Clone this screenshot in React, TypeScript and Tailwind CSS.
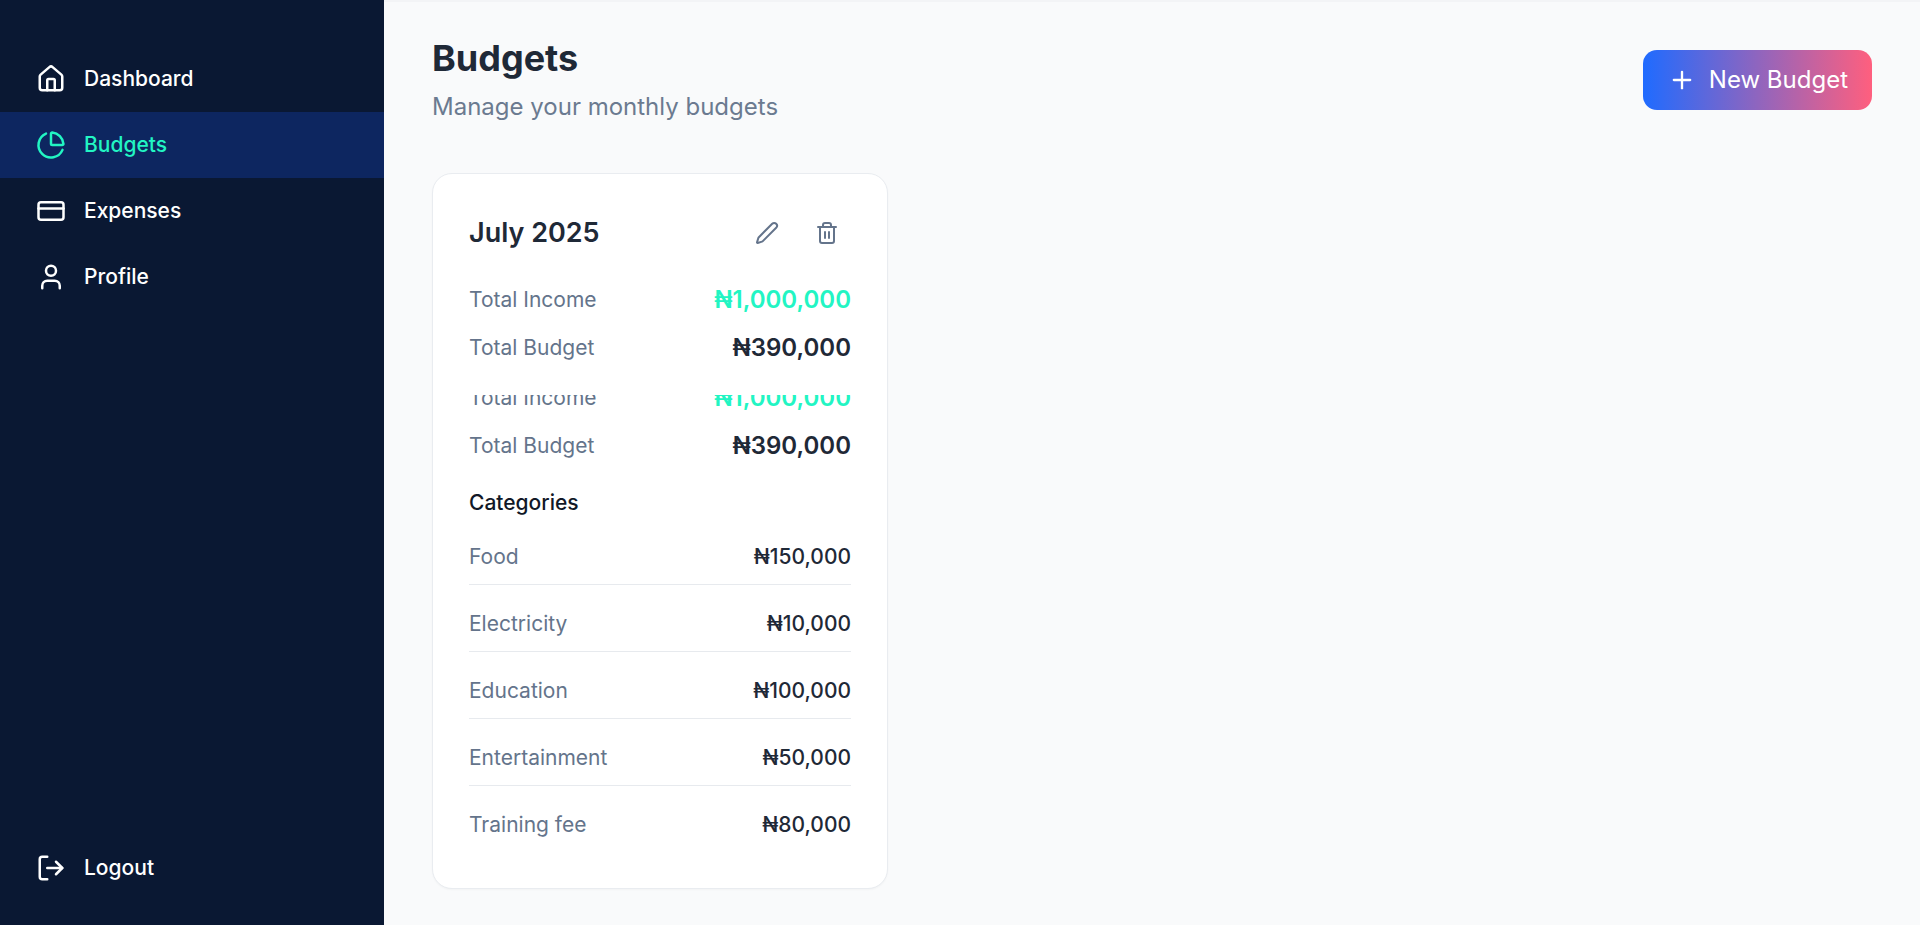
import { ChartPie, CreditCard, House, LogOut, Pen, Plus, Trash2, User } from "lucide-react";

const navItems = [
  { label: "Dashboard", icon: House },
  { label: "Budgets", icon: ChartPie, active: true },
  { label: "Expenses", icon: CreditCard },
  { label: "Profile", icon: User },
];

const categories = [
  { name: "Food", amount: "₦150,000" },
  { name: "Electricity", amount: "₦10,000" },
  { name: "Education", amount: "₦100,000" },
  { name: "Entertainment", amount: "₦50,000" },
  { name: "Training fee", amount: "₦80,000" },
];

function Totals() {
  return (
    <div className="flex flex-col gap-5">
      <div className="flex h-7 items-center justify-between">
        <span className="text-[21px] text-[#64748b]">Total Income</span>
        <span className="text-[24px] font-semibold text-[#22f5c3]">₦1,000,000</span>
      </div>
      <div className="flex h-7 items-center justify-between">
        <span className="text-[21px] text-[#64748b]">Total Budget</span>
        <span className="text-[24px] font-semibold text-[#1f2937]">₦390,000</span>
      </div>
    </div>
  );
}

export default function App() {
  return (
    <div className="flex h-[925px] overflow-hidden bg-[#f9fafb] font-['Inter',sans-serif]">
      <aside className="flex w-[384px] shrink-0 flex-col justify-between bg-[#0a1833] pt-[46px] pb-[24px]">
        <nav className="flex flex-col">
          {navItems.map((item) => (
            <div
              key={item.label}
              className={`flex h-[66px] items-center gap-[18px] pl-[36px] text-[21px] font-medium ${
                item.active ? "bg-[#0d2660] text-[#22f5c3]" : "text-white"
              }`}
            >
              <item.icon size={30} strokeWidth={2} />
              <span>{item.label}</span>
            </div>
          ))}
        </nav>
        <div className="flex h-[66px] items-center gap-[18px] pl-[36px] text-[21px] font-medium text-white">
          <LogOut size={30} strokeWidth={2} />
          <span>Logout</span>
        </div>
      </aside>

      <main className="flex-1 border-t-2 border-[#f3f4f6] px-12 pt-[34px]">
        <div className="flex items-start justify-between">
          <div>
            <h1 className="text-[36px] leading-[44px] font-bold text-[#1f2937]">Budgets</h1>
            <p className="mt-[11px] text-[24px] leading-[32px] text-[#6b7a90]">Manage your monthly budgets</p>
          </div>
          <button className="mt-[14px] flex h-[60px] items-center gap-[13px] rounded-[14px] bg-linear-to-r/srgb from-[#1f6bff] to-[#ff5f7e] pr-6 pl-[25px] text-[24px] text-white">
            <Plus size={28} />
            New Budget
          </button>
        </div>

        <div className="mt-[50px] w-[456px] rounded-[20px] border border-[#e9ecf0] bg-white px-9 pt-[37px] pb-[35px] shadow-[0_1px_2px_rgba(0,0,0,0.03)]">
          <div className="flex h-[44px] items-center justify-between">
            <h2 className="text-[27px] font-semibold text-[#1f2937]">July 2025</h2>
            <div className="flex items-center gap-[36px] pr-[12px] text-[#64748b]">
              <Pen size={24} strokeWidth={2} />
              <Trash2 size={24} strokeWidth={2} />
            </div>
          </div>

          <div className="mt-[31px]">
            <Totals />
          </div>

          <div className="mt-[33px] overflow-hidden">
            <div className="-mt-[11px]">
              <Totals />
            </div>
          </div>

          <h3 className="mt-[29px] text-[21px] leading-7 font-medium text-[#111827]">Categories</h3>

          <div className="mt-px flex flex-col">
            {categories.map((category, index) => (
              <div
                key={category.name}
                className={`mt-[12px] flex h-[55px] items-center justify-between border-b ${
                  index < categories.length - 1 ? "border-[#e7eaee]" : "border-transparent"
                }`}
              >
                <span className="text-[21px] text-[#64748b]">{category.name}</span>
                <span className="text-[21px] font-medium text-[#1f2937]">{category.amount}</span>
              </div>
            ))}
          </div>
        </div>
      </main>
    </div>
  );
}
